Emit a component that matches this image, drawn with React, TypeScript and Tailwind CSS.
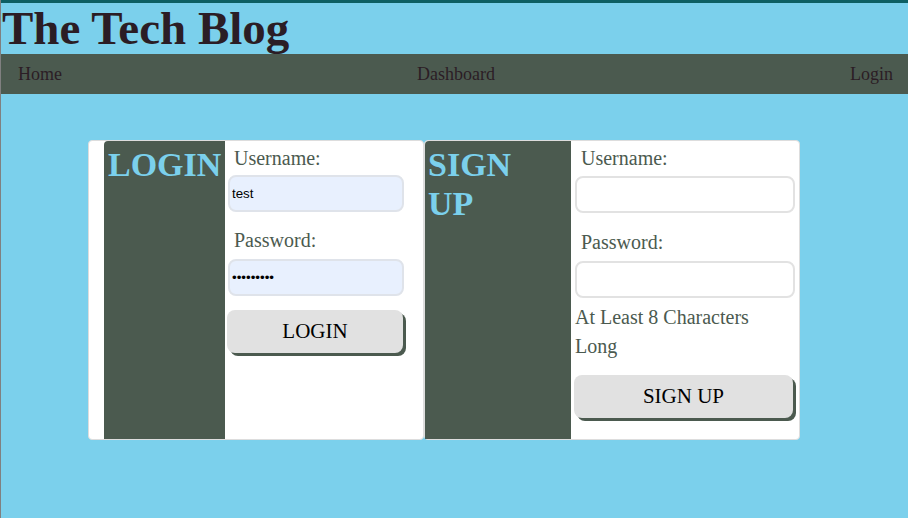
import React from "react";

const serif = "font-['Liberation_Serif','Times_New_Roman',serif]";

export default function App() {
  return (
    <div className={`min-h-screen w-full bg-[#7bd0ec] border-l border-[#808080] ${serif}`}>
      <div className="h-[3px] bg-[#0e5f63]" />
      <header className="h-[51px] pl-[1px]">
        <h1 className="text-[47px] leading-[51px] font-bold text-[#2b1d25]">The Tech Blog</h1>
      </header>
      <nav className="h-[40px] bg-[#4b5a4f] flex items-center justify-between pl-[17px] pr-[15px] text-[18px] text-[#2b1d25]">
        <a>Home</a>
        <a>Dashboard</a>
        <a>Login</a>
      </nav>

      <main className="mt-[46px] ml-[87px] flex">
        {/* Login card */}
        <section className="w-[336px] h-[300px] bg-white border border-[#dddddd] rounded-[4px] flex pl-[15px]">
          <div className="w-[121px] bg-[#4b5a4f] rounded-tl-[4px] pt-[4px] pl-[4px]">
            <h2 className="text-[34px] leading-[39px] font-bold text-[#7bd0ec]">LOGIN</h2>
          </div>
          <div className="flex-1 flex flex-col">
            <label className="pl-[9px] pt-[3px] pb-[3px] text-[20px] leading-[28px] text-[#4b5a4f]">Username:</label>
            <input
              readOnly
              defaultValue="test"
              className="ml-[3px] w-[176px] h-[37px] bg-[#e8f0fe] border-2 border-[#dfe3ea] rounded-[8px] px-[2px] text-[13.33px] text-black font-['Liberation_Sans',Arial,sans-serif] outline-none"
            />
            <label className="mt-[11px] pl-[9px] pt-[3px] pb-[5px] text-[20px] leading-[28px] text-[#4b5a4f]">Password:</label>
            <input
              readOnly
              type="password"
              defaultValue="password1"
              className="ml-[3px] w-[176px] h-[37px] bg-[#e8f0fe] border-2 border-[#dfe3ea] rounded-[8px] px-[2px] text-[13.33px] text-black font-['Liberation_Sans',Arial,sans-serif] outline-none"
            />
            <button className="mt-[14px] ml-[2px] w-[176px] h-[43px] bg-[#e1e1e1] rounded-[8px] shadow-[3px_3px_0_#4b5a4f] text-[21px] text-black">
              LOGIN
            </button>
          </div>
        </section>

        {/* Signup card */}
        <section className="w-[376px] h-[300px] bg-white border border-[#dddddd] rounded-[4px] flex">
          <div className="w-[146px] bg-[#4b5a4f] rounded-tl-[4px] pt-[4px] pl-[3px]">
            <h2 className="w-[110px] text-[34px] leading-[39px] font-bold text-[#7bd0ec]">SIGN UP</h2>
          </div>
          <div className="flex-1 flex flex-col">
            <label className="pl-[10px] pt-[3px] pb-[4px] text-[20px] leading-[28px] text-[#4b5a4f]">Username:</label>
            <input
              readOnly
              className="ml-[4px] w-[220px] h-[37px] bg-white border-2 border-[#e2e2e2] rounded-[8px] px-[2px] text-[13.33px] font-['Liberation_Sans',Arial,sans-serif] outline-none"
            />
            <label className="mt-[12px] pl-[10px] pt-[3px] pb-[5px] text-[20px] leading-[28px] text-[#4b5a4f]">Password:</label>
            <input
              readOnly
              type="password"
              className="ml-[4px] w-[220px] h-[37px] bg-white border-2 border-[#e2e2e2] rounded-[8px] px-[2px] text-[13.33px] font-['Liberation_Sans',Arial,sans-serif] outline-none"
            />
            <p className="mt-[5px] ml-[4px] w-[212px] text-[20px] leading-[29px] text-[#4b5a4f]">At Least 8 Characters Long</p>
            <button className="mt-[14px] ml-[3px] w-[219px] h-[43px] bg-[#e1e1e1] rounded-[8px] shadow-[3px_3px_0_#4b5a4f] text-[21px] text-black">
              SIGN UP
            </button>
          </div>
        </section>
      </main>
    </div>
  );
}
